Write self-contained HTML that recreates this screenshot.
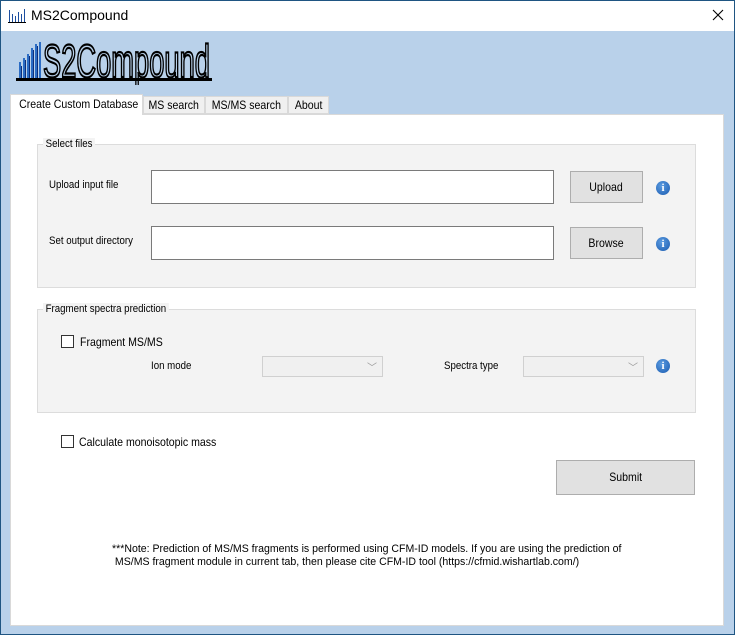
<!DOCTYPE html>
<html><head><style>
*{margin:0;padding:0;box-sizing:border-box}
body{width:735px;height:635px;overflow:hidden;font-family:"Liberation Sans",sans-serif;font-size:11px;color:#000;position:relative;background:#b9d1ea}
.abs{position:absolute}
.win{left:0;top:0;width:735px;height:635px;border:1px solid #1f5582}
.title{left:1px;top:1px;width:733px;height:30px;background:#fff}
.page{left:10px;top:114px;width:714px;height:512px;background:#fff;border:1px solid #d9d9d9}
.grp{background:#f3f3f3;border:1px solid #dcdcdc}
.lbl{white-space:nowrap;transform:scaleX(0.88);transform-origin:0 0}
.tb{background:#fff;border:1px solid #7a7a7a}
.btn{background:#e1e1e1;border:1px solid #adadad;text-align:center;font-size:12px}
.btn span{display:inline-block;transform:scaleX(0.88)}
.info{width:14px;height:14px;border-radius:50%;background:radial-gradient(circle at 40% 35%,#5b9be0,#1a5bb0);color:#fff;font:bold 11px "Liberation Serif",serif;text-align:center;line-height:14px}
.cb{width:13px;height:13px;border:1px solid #333;background:#fff}
.combo{background:#f0f0f0;border:1px solid #d0d0d0}
.tab{top:96px;height:18px;background:#f0f0f0;border:1px solid #d9d9d9;font-size:12px;line-height:16px;text-align:center;white-space:nowrap;overflow:hidden}
.tab span{display:inline-block;transform:scaleX(0.88)}
</style></head><body>
<div class="abs win"></div>
<div class="abs title"></div>
<svg class="abs" style="left:8px;top:8px" width="18" height="16"><g fill="#1d4fa0"><rect x="1" y="2" width="1" height="12"/><rect x="4" y="6" width="1" height="8"/><rect x="7" y="8" width="1" height="6"/><rect x="10" y="4" width="1" height="10"/><rect x="13" y="6" width="1" height="8"/><rect x="16" y="1" width="1" height="13"/></g><rect x="0" y="14" width="18" height="1" fill="#000"/></svg>
<div class="abs" style="left:31px;top:7px;font-size:14px;white-space:nowrap">MS2Compound</div>
<svg class="abs" style="left:712px;top:9px" width="12" height="12"><path d="M1 1L11 11M11 1L1 11" stroke="#000" stroke-width="1.1"/></svg>
<svg class="abs" style="left:15px;top:40px" width="200" height="45">
<g fill="#2b6cc4"><rect x="4" y="22" width="2" height="16"/><rect x="8" y="18" width="2" height="20"/><rect x="12" y="14" width="2" height="24"/><rect x="16" y="8" width="2" height="30"/><rect x="20" y="4" width="2" height="34"/><rect x="24" y="2" width="2" height="36"/></g>
<g fill="#0d2f7a"><rect x="6" y="26" width="1" height="12"/><rect x="10" y="20" width="1" height="18"/><rect x="14" y="16" width="1" height="22"/><rect x="18" y="10" width="1" height="28"/><rect x="22" y="6" width="1" height="32"/></g>
<rect x="1" y="38" width="196" height="3" fill="#000"/>
<text x="28" y="37" font-family="Liberation Sans Narrow, Liberation Sans, sans-serif" font-size="46" textLength="167" lengthAdjust="spacingAndGlyphs" fill="none" stroke="#000" stroke-width="2.2">S2Compound</text>
</svg>
<div class="abs tab" style="left:10px;top:94px;width:133px;height:21px;background:#fff;border-bottom:none;z-index:2;line-height:19px"><span>Create Custom Database</span></div>
<div class="abs tab" style="left:143px;width:62px"><span>MS search</span></div>
<div class="abs tab" style="left:205px;width:83px"><span>MS/MS search</span></div>
<div class="abs tab" style="left:288px;width:41px"><span>About</span></div>
<div class="abs page"></div>
<div class="abs grp" style="left:37px;top:144px;width:659px;height:144px"></div>
<div class="abs lbl" style="left:43px;top:138px;background:#f3f3f3;padding:0 3px">Select files</div>
<div class="abs lbl" style="left:49px;top:179px">Upload input file</div>
<div class="abs tb" style="left:151px;top:170px;width:403px;height:34px"></div>
<div class="abs btn" style="left:570px;top:171px;width:73px;height:32px;line-height:30px"><span>Upload</span></div>
<div class="abs info" style="left:656px;top:181px">i</div>
<div class="abs lbl" style="left:49px;top:235px">Set output directory</div>
<div class="abs tb" style="left:151px;top:226px;width:403px;height:34px"></div>
<div class="abs btn" style="left:570px;top:227px;width:73px;height:32px;line-height:30px"><span>Browse</span></div>
<div class="abs info" style="left:656px;top:237px">i</div>
<div class="abs grp" style="left:37px;top:309px;width:659px;height:104px"></div>
<div class="abs lbl" style="left:43px;top:303px;background:#f3f3f3;padding:0 3px">Fragment spectra prediction</div>
<div class="abs cb" style="left:61px;top:335px"></div>
<div class="abs lbl" style="left:80px;top:335px;font-size:12px">Fragment MS/MS</div>
<div class="abs lbl" style="left:151px;top:360px">Ion mode</div>
<div class="abs combo" style="left:262px;top:356px;width:121px;height:21px"><span style="position:absolute;right:5px;top:2px;color:#999;font-size:10px">﹀</span></div>
<div class="abs lbl" style="left:444px;top:360px">Spectra type</div>
<div class="abs combo" style="left:523px;top:356px;width:121px;height:21px"><span style="position:absolute;right:5px;top:2px;color:#999;font-size:10px">﹀</span></div>
<div class="abs info" style="left:656px;top:359px">i</div>
<div class="abs cb" style="left:61px;top:435px"></div>
<div class="abs lbl" style="left:79px;top:435px;font-size:12px">Calculate monoisotopic mass</div>
<div class="abs btn" style="left:556px;top:460px;width:139px;height:35px;line-height:33px"><span>Submit</span></div>
<div class="abs lbl" style="left:112px;top:543px;line-height:13px;font-size:11px;transform:scaleX(0.96)">***Note: Prediction of MS/MS fragments is performed using CFM-ID models. If you are using the prediction of<br>&nbsp;MS/MS fragment module in current tab, then please cite CFM-ID tool (https://cfmid.wishartlab.com/)</div>
</body></html>
